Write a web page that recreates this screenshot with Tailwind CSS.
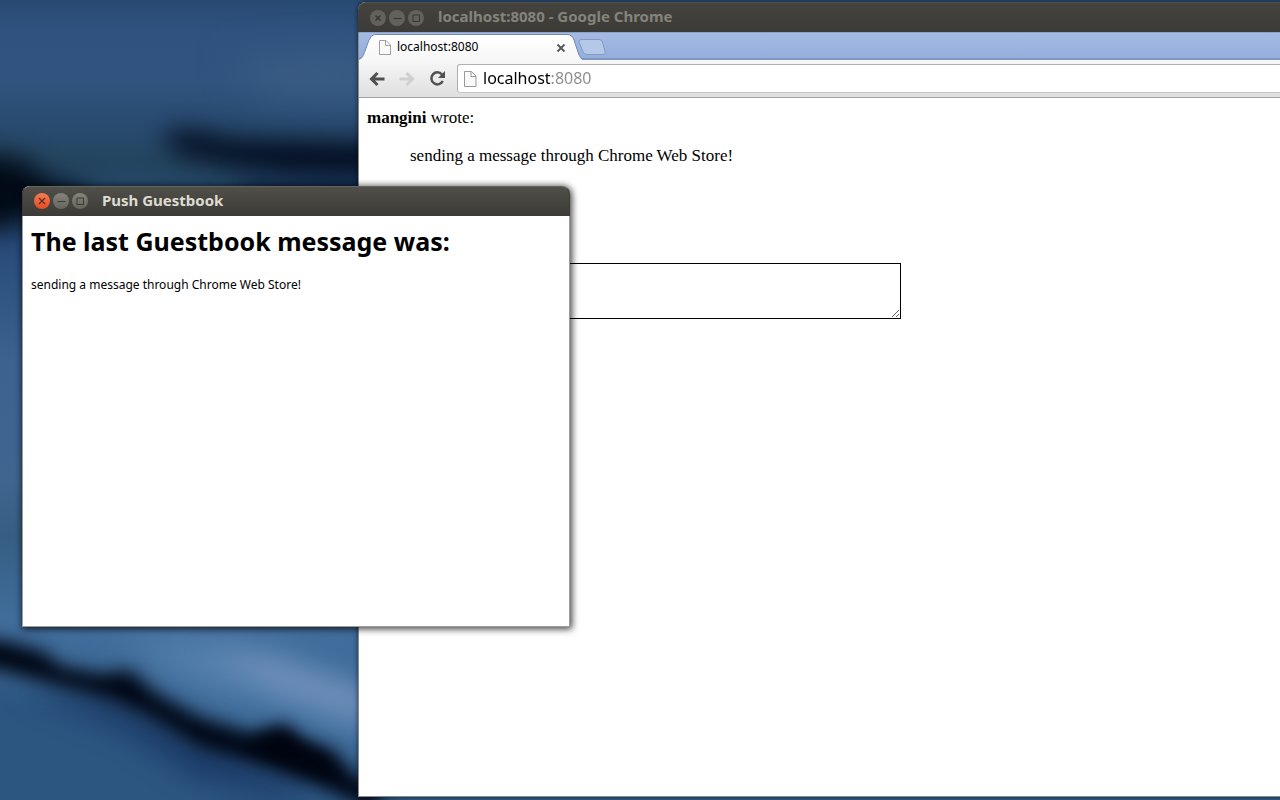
<!DOCTYPE html>
<html lang="en">
<head>
<meta charset="utf-8">
<title>Push Guestbook</title>
<script src="https://cdn.jsdelivr.net/npm/@tailwindcss/browser@4"></script>
</head>
<body class="relative h-screen overflow-hidden bg-[#2f5580] font-['Noto_Sans','Open_Sans',sans-serif] text-black">

<!-- Wallpaper -->
<svg class="absolute inset-0 h-full w-full" viewBox="0 0 1280 800" preserveAspectRatio="xMinYMin slice" aria-hidden="true">
  <defs>
    <linearGradient id="sky" x1="0" y1="0" x2="0" y2="1">
      <stop offset="0" stop-color="#284a72"/>
      <stop offset=".04" stop-color="#2f527f"/>
      <stop offset=".1" stop-color="#31547f"/>
      <stop offset=".15" stop-color="#2a4c72"/>
      <stop offset=".2" stop-color="#24455f"/>
      <stop offset=".3" stop-color="#274a78"/>
      <stop offset=".45" stop-color="#3d6290"/>
      <stop offset=".6" stop-color="#40658f"/>
      <stop offset=".67" stop-color="#365e83"/>
      <stop offset=".78" stop-color="#416e9c"/>
      <stop offset="1" stop-color="#2f5a86"/>
    </linearGradient>
    <filter id="b1" x="-30%" y="-80%" width="160%" height="260%" color-interpolation-filters="sRGB"><feGaussianBlur stdDeviation="18"/></filter>
    <filter id="b2" x="-30%" y="-80%" width="160%" height="260%" color-interpolation-filters="sRGB"><feGaussianBlur stdDeviation="13"/></filter>
    <filter id="b3" x="-30%" y="-80%" width="160%" height="260%" color-interpolation-filters="sRGB"><feGaussianBlur stdDeviation="9"/></filter>
  </defs>
  <rect width="1280" height="800" fill="url(#sky)"/>
  <path d="M230 60L370 50V100L270 95Z" fill="#3a5c84" filter="url(#b1)"/>
  <path d="M-60 150L20 158L50 180L90 190V200L30 215L10 230L-60 225Z" fill="#010a16" filter="url(#b2)"/>
  <path d="M160 134L190 130L235 140L300 142L420 145V182L290 176L205 160L175 152Z" fill="#020b1e" filter="url(#b2)"/>
  <path d="M240 180L390 172V210L240 205Z" fill="#12284c" filter="url(#b2)"/>
  <path d="M110 640L200 635L280 650L380 690V750L300 720L200 690L150 660Z" fill="#5580ae" filter="url(#b1)"/>
  <path d="M205 650L270 660L370 695V720L280 690Z" fill="#7290ba" filter="url(#b2)"/>
  <path d="M-60 675L60 695L150 725L220 765L380 820V840H-60Z" fill="#2c5580" filter="url(#b2)"/>
  <path d="M20 690L110 700L190 740L300 785L300 800L200 780L120 730Z" fill="#1b3b68" filter="url(#b2)"/>
  <path d="M-40 634L10 642L45 652L60 666L100 674L130 670L155 693L200 718L250 736L285 724L300 742L330 750L350 772L380 790V815L325 788L270 768L200 748L150 718L110 700L50 684L0 670H-40Z" fill="#000614" filter="url(#b3)"/>
  <path d="M205 726L250 740L285 732L330 760L342 780L270 758Z" fill="#00040f" filter="url(#b3)"/>
</svg>

<!-- Browser window -->
<main class="absolute -right-4 bottom-[3px] left-[358px] top-[2px] flex flex-col rounded-t-lg border border-t-0 border-[#8d8b86] bg-white shadow-[0_0_5px_rgba(0,0,0,0.6)]">
  <header class="-mx-px flex h-[30px] shrink-0 items-center rounded-t-lg border-t border-[#4f4e49] bg-linear-to-b from-[#44433e] to-[#3c3b37] pl-3">
    <div class="flex gap-[3px]">
      <button aria-label="Close" class="grid size-4 place-items-center rounded-full bg-[#62615b]"><svg class="size-4" viewBox="0 0 16 16" fill="none" stroke="#373631" stroke-width="1.5"><path d="M5.5 5.5l5 5m0-5l-5 5"/></svg></button>
      <button aria-label="Minimize" class="grid size-4 place-items-center rounded-full bg-[#62615b]"><svg class="size-4" viewBox="0 0 16 16" fill="none" stroke="#373631"><path d="M4.5 8.5h8"/></svg></button>
      <button aria-label="Maximize" class="grid size-4 place-items-center rounded-full bg-[#62615b]"><svg class="size-4" viewBox="0 0 16 16" fill="none" stroke="#373631"><path d="M5 5h6.500v6.500h-6.500z"/></svg></button>
    </div>
    <h1 class="mb-[3px] ml-[14px] whitespace-nowrap text-[15px] font-bold leading-5 text-[#85837c]">localhost:8080 - Google Chrome</h1>
  </header>

  <nav class="relative flex h-7 shrink-0 items-end border-t border-[#8ea3c8] bg-linear-to-b from-[#a3bbe4] to-[#95addb]">
    <div class="absolute inset-x-0 bottom-0 h-[2px] bg-[#7f97c1]"></div>
    <div class="relative flex h-[27px] w-[224px] items-center pl-[18px] pr-[14px]">
      <svg class="absolute inset-0 h-[27px] w-[224px]" viewBox="0 0 224 27" aria-hidden="true">
        <defs><linearGradient id="tab" x1="0" y1="0" x2="0" y2="1"><stop offset="0" stop-color="#fff"/><stop offset="1" stop-color="#f7f7f7"/></linearGradient></defs>
        <path d="M-1 27C4 26 4 23 6 18L10 7Q12 1.500 16 1.500H208Q213 1.500 215 7L219 19Q221 26 224 27Z" fill="url(#tab)"/>
        <path d="M-1 26C4 25 4 23 6 18L10 7Q12 1.500 16 1.500H208Q213 1.500 215 7L219 19Q221 26 225 26.500" fill="none" stroke="#7289b5"/>
      </svg>
      <svg class="relative size-4 shrink-0" viewBox="0 0 16 16" fill="#fafafa" stroke="#a0a0a0" aria-hidden="true"><path d="M2.500 1.500h6.500l4.500 4.500v9.500h-11z"/><path d="M8.500 1.500v5h5" fill="none"/></svg>
      <span class="relative ml-1 grow text-[12px] leading-4">localhost:8080</span>
      <button aria-label="Close tab" class="relative grid size-4 place-items-center"><svg class="size-4" viewBox="0 0 16 16" fill="none" stroke="#55565a" stroke-width="1.800"><path d="M4.500 5.500l7 7m0-7l-7 7"/></svg></button>
    </div>
    <button aria-label="New tab" class="relative -ml-[5px] mb-[3px] h-[18px] w-7"><svg class="h-[18px] w-7" viewBox="0 0 28 18" fill="#b5c8e8" stroke="#8299c5"><path d="M3 .5H21Q23.500 .5 24.500 3L27 12Q28 15.500 24.500 15.500H9Q6 15.500 5 13L1 3Q.5 .5 3 .5Z"/></svg></button>
  </nav>

  <div class="flex h-[38px] shrink-0 items-center border-b border-[#a4a4a4] bg-linear-to-b from-[#f7f7f7] to-[#dfdfdf] pl-[10px]">
    <button aria-label="Back" class="size-4"><svg class="size-4" viewBox="0 0 16 16" fill="none" stroke="#505050" stroke-width="3"><path d="M2 8H15.500M8.500 2L2.500 8l6 6"/></svg></button>
    <button aria-label="Forward" class="ml-[14px] size-4"><svg class="size-4" viewBox="0 0 16 16" fill="none" stroke="#cfcfcf" stroke-width="3"><path d="M14 8H.5M7.500 2l6 6l-6 6"/></svg></button>
    <button aria-label="Reload" class="ml-[14px] size-4"><svg class="size-4" viewBox="0 0 16 16" fill="none" stroke="#505050" stroke-width="2.500"><path d="M13 3.500A6 6 0 1 0 13.800 10"/><path d="M16 0v7H9z" fill="#505050" stroke="none"/></svg></button>
    <div class="ml-3 flex h-[29px] grow items-center rounded-l-[3px] border border-[#b0b0b0] border-b-[#c6c6c6] bg-white pl-1">
      <svg class="size-[18px] shrink-0" viewBox="0 0 18 18" fill="#fafafa" stroke="#999" aria-hidden="true"><path d="M2.500 1.500h7l4.500 4.500v10.500h-11.500z"/><path d="M9 1.500v5h5" fill="none"/></svg>
      <input aria-label="Address" type="text" value="localhost:8080" class="mb-[2px] ml-[3px] h-6 grow bg-linear-to-r from-black from-[68px] to-[#8c8c8c] to-[68px] bg-clip-text text-[16px] leading-6 text-transparent outline-none">
    </div>
  </div>

  <section class="px-2 pt-[10px] font-['Liberation_Serif',serif] text-[17px] leading-[19px]">
    <p><b>mangini</b> wrote:</p>
    <blockquote class="ml-[43px] mt-[19px]">sending a message through Chrome Web Store!</blockquote>
    <textarea aria-label="Message" class="mt-[98px] block h-14 w-[534px] border border-black bg-white"></textarea>
  </section>
</main>

<!-- Notification window -->
<section class="absolute left-[22px] top-[186px] flex h-[441px] w-[548px] flex-col rounded-t-lg border border-t-0 border-[#a09d97] bg-white shadow-[1px_1px_7px_1px_rgba(0,0,0,0.75)]">
  <header class="-mx-px flex h-[30px] shrink-0 items-center rounded-t-lg border border-[#3c3b37] border-t-[#65645d] bg-linear-to-b from-[#504f49] to-[#3c3b37] pl-[11px]">
    <div class="flex gap-[3px]">
      <button aria-label="Close" class="grid size-4 place-items-center rounded-full bg-linear-to-b from-[#f47a55] to-[#e24c1c]"><svg class="size-4" viewBox="0 0 16 16" fill="none" stroke="#5e2a18" stroke-width="1.200"><path d="M5 5l6 6m0-6l-6 6"/></svg></button>
      <button aria-label="Minimize" class="grid size-4 place-items-center rounded-full bg-linear-to-b from-[#86847c] to-[#65645d]"><svg class="size-4" viewBox="0 0 16 16" fill="none" stroke="#3b3a35"><path d="M4.500 8.500h8"/></svg></button>
      <button aria-label="Maximize" class="grid size-4 place-items-center rounded-full bg-linear-to-b from-[#86847c] to-[#65645d]"><svg class="size-4" viewBox="0 0 16 16" fill="none" stroke="#3b3a35"><path d="M5 5h6.500v6.500h-6.500z"/></svg></button>
    </div>
    <h2 class="mb-[3px] ml-[14px] whitespace-nowrap text-[15px] font-bold leading-5 text-[#dfdbd2]">Push Guestbook</h2>
  </header>
  <div class="px-2 pt-[7px]">
    <h3 class="whitespace-nowrap text-[25px] font-bold leading-9">The last Guestbook message was:</h3>
    <p class="mt-[17px] text-[12px] leading-[18px]">sending a message through Chrome Web Store!</p>
  </div>
</section>
</body>
</html>
